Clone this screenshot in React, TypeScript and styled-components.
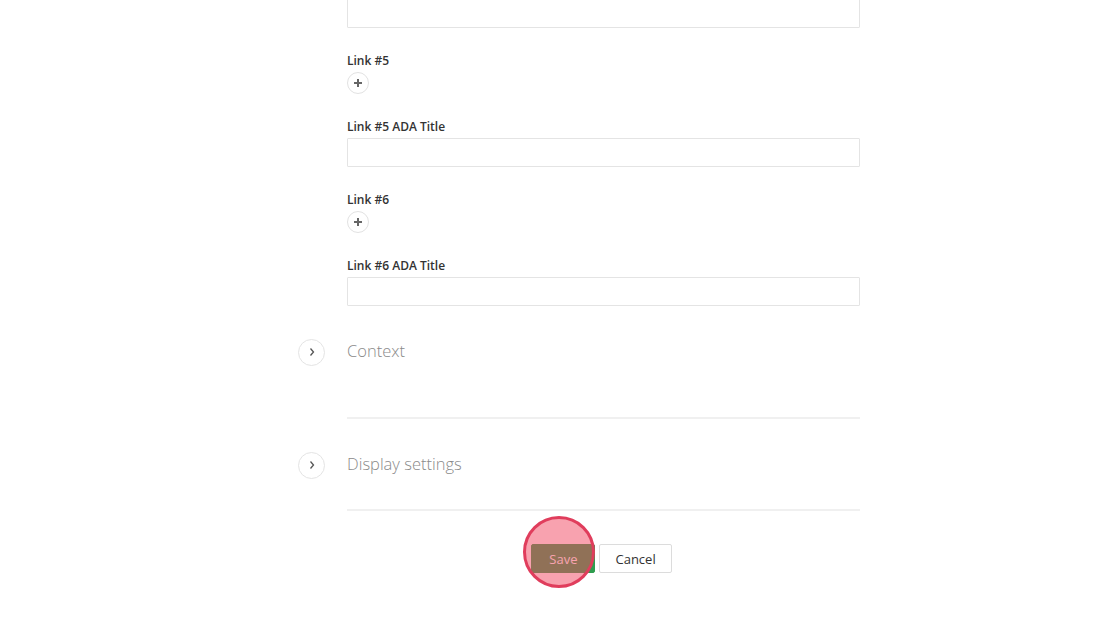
import styled, { createGlobalStyle } from "styled-components";

const Global = createGlobalStyle`
  html, body {
    margin: 0;
    padding: 0;
    background: #fff;
    overflow: hidden;
  }
  body {
    font-family: "Open Sans", "Liberation Sans", sans-serif;
    color: #333;
  }
`;

const Page = styled.div`
  width: 1120px;
  height: 627px;
  padding-left: 347px;
  box-sizing: border-box;
`;

const Column = styled.div`
  width: 513px;
  display: flex;
  flex-direction: column;
  margin-top: -1px;
`;

const Field = styled.div`
  display: flex;
  flex-direction: column;
  gap: 2px;
  margin-top: ${(p: { $first?: boolean }) => (p.$first ? "0" : "24px")};
`;

const Label = styled.label`
  font-size: 12px;
  font-weight: 600;
  line-height: 18px;
  color: #333;
`;

const TextInput = styled.input`
  width: 100%;
  height: 29px;
  box-sizing: border-box;
  border: 1px solid #e4e4e4;
  border-radius: 1px;
  background: #fff;
  outline: none;
`;

const AddButton = styled.button`
  width: 22px;
  height: 22px;
  padding: 0;
  border: 1px solid #e2e2e2;
  border-radius: 50%;
  background: #fff;
  display: flex;
  align-items: center;
  justify-content: center;
  color: #666;
`;

const Section = styled.div<{ $pad: number }>`
  margin-top: 33px;
  padding-bottom: ${(p) => p.$pad}px;
  border-bottom: 2px solid #f0f0f0;
`;

const SectionHeader = styled.div`
  display: flex;
  align-items: center;
  gap: 22px;
  margin-left: -49px;
  height: 26px;
`;

const Toggle = styled.button`
  width: 27px;
  height: 27px;
  padding: 0;
  border: 1px solid #e4e4e4;
  border-radius: 50%;
  background: #fff;
  display: flex;
  align-items: center;
  justify-content: center;
  color: #555;
`;

const SectionTitle = styled.span`
  font-size: 16.5px;
  font-weight: 300;
  color: #8a8a8a;
  margin-top: -4px;
`;

const Actions = styled.div`
  display: flex;
  justify-content: center;
  gap: 4px;
  margin-top: 33px;
  padding-right: 4px;
`;

const Btn = styled.button<{ $primary?: boolean }>`
  position: relative;
  height: 29px;
  padding: 0 ${(p) => (p.$primary ? "17px" : "15px")};
  font-family: "Open Sans", "Liberation Sans", sans-serif;
  font-size: 13px;
  border-radius: 2px;
  border: 1px solid ${(p) => (p.$primary ? "#2f9d4e" : "#dcdcdc")};
  background: ${(p) => (p.$primary ? "#2f9d4e" : "#fff")};
  color: ${(p) => (p.$primary ? "#fff" : "#333")};
`;

const ClickMarker = styled.span`
  position: absolute;
  left: -9px;
  top: -29px;
  width: 66px;
  height: 66px;
  border-radius: 50%;
  border: 3px solid #e03d5c;
  background: rgba(241, 69, 96, 0.5);
  pointer-events: none;
`;

const Plus = () => (
  <svg width="10" height="10" viewBox="0 0 10 10">
    <path d="M5 1v8M1 5h8" stroke="currentColor" strokeWidth="2" />
  </svg>
);

const Chevron = () => (
  <svg width="8" height="10" viewBox="0 0 8 10">
    <polyline points="2.5,1.5 5.5,5 2.5,8.5" fill="none" stroke="currentColor" strokeWidth="1.3" />
  </svg>
);

export default function App() {
  return (
    <>
      <Global />
      <Page>
        <Column>
          <Field $first>
            <TextInput />
          </Field>
          <Field>
            <Label>Link #5</Label>
            <AddButton>
              <Plus />
            </AddButton>
          </Field>
          <Field>
            <Label>Link #5 ADA Title</Label>
            <TextInput />
          </Field>
          <Field>
            <Label>Link #6</Label>
            <AddButton>
              <Plus />
            </AddButton>
          </Field>
          <Field>
            <Label>Link #6 ADA Title</Label>
            <TextInput />
          </Field>
          <Section $pad={52}>
            <SectionHeader>
              <Toggle>
                <Chevron />
              </Toggle>
              <SectionTitle>Context</SectionTitle>
            </SectionHeader>
          </Section>
          <Section $pad={31}>
            <SectionHeader>
              <Toggle>
                <Chevron />
              </Toggle>
              <SectionTitle>Display settings</SectionTitle>
            </SectionHeader>
          </Section>
          <Actions>
            <Btn $primary>
              Save
              <ClickMarker />
            </Btn>
            <Btn>Cancel</Btn>
          </Actions>
        </Column>
      </Page>
    </>
  );
}
